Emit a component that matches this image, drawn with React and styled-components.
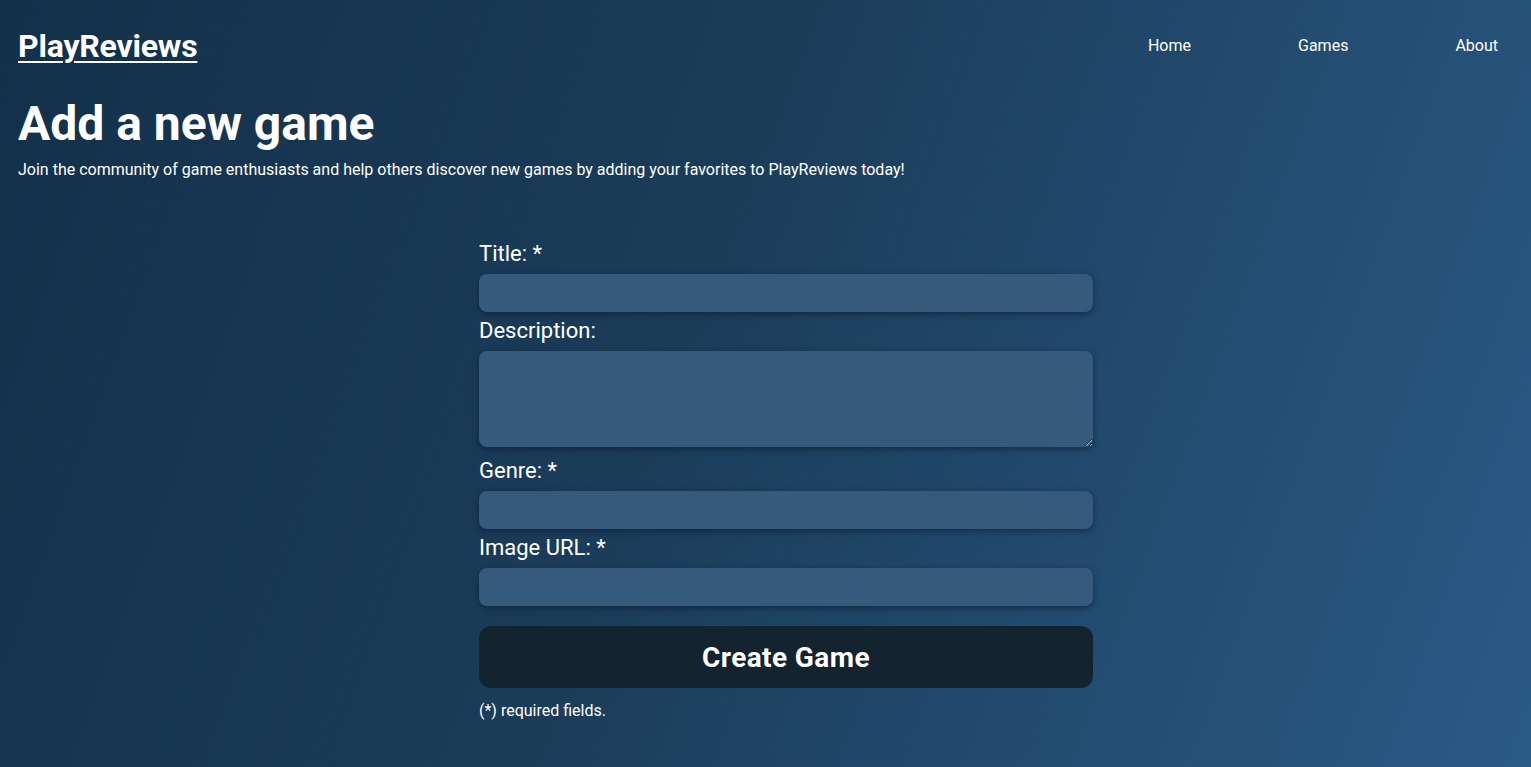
import React from "react";
import styled, { createGlobalStyle } from "styled-components";

const GlobalStyle = createGlobalStyle`
  html, body {
    margin: 0;
    padding: 0;
    min-height: 100%;
  }
  body {
    font-family: Roboto, "Noto Sans", sans-serif;
    color: #ffffff;
    background: #163650;
  }
  * { box-sizing: border-box; }
`;

const Page = styled.div`
  min-height: 767px;
  background: linear-gradient(110deg, #12304a 0%, #1b3d5a 45%, #2a5a86 100%);
  padding: 0 33px 40px 18px;
`;

const Header = styled.header`
  display: flex;
  align-items: center;
  justify-content: space-between;
  height: 91px;
`;

const Logo = styled.a`
  font-size: 32px;
  font-weight: 700;
  color: #ffffff;
  text-decoration: underline;
  text-decoration-thickness: 2px;
  text-underline-offset: 4px;
  letter-spacing: -0.2px;
`;

const Nav = styled.nav`
  display: flex;
  gap: 107px;
`;

const NavLink = styled.a`
  font-size: 16px;
  color: #ffffff;
  text-decoration: none;
`;

const Hero = styled.section`
  display: flex;
  flex-direction: column;
`;

const Title = styled.h1`
  margin: 5px 0 0;
  font-size: 48px;
  font-weight: 700;
  line-height: 56px;
`;

const Subtitle = styled.p`
  margin: 8px 0 0;
  font-size: 16px;
  line-height: 19px;
`;

const FormWrap = styled.div`
  display: flex;
  justify-content: flex-start;
  padding-left: 461px;
  margin-top: 62px;
`;

const Form = styled.form`
  width: 614px;
  display: flex;
  flex-direction: column;
`;

const Label = styled.label`
  display: block;
  font-size: 22px;
  line-height: 26px;
  margin-bottom: 7px;
`;

const fieldStyles = `
  display: block;
  width: 100%;
  border: none;
  border-radius: 8px;
  background: #355a7b;
  color: #ffffff;
  font-family: Roboto, sans-serif;
  font-size: 16px;
  box-shadow: 0 2px 6px rgba(8, 20, 35, 0.55);
  outline: none;
`;

const Input = styled.input`
  ${fieldStyles}
  height: 38px;
  padding: 0 12px;
  margin-bottom: 6px;
`;

const TextArea = styled.textarea`
  ${fieldStyles}
  height: 96px;
  padding: 10px 12px;
  margin-bottom: 11px;
  resize: vertical;
`;

const Button = styled.button`
  margin-top: 14px;
  height: 62px;
  width: 100%;
  border: none;
  border-radius: 12px;
  background: #14242f;
  color: #ffffff;
  font-family: Roboto, sans-serif;
  font-size: 28px;
  font-weight: 700;
  letter-spacing: 0.4px;
  cursor: pointer;
`;

const Note = styled.p`
  margin: 13px 0 0;
  font-size: 16px;
  line-height: 19px;
`;

export default function App() {
  return (
    <>
      <GlobalStyle />
      <Page>
        <Header>
          <Logo href="#">PlayReviews</Logo>
          <Nav>
            <NavLink href="#">Home</NavLink>
            <NavLink href="#">Games</NavLink>
            <NavLink href="#">About</NavLink>
          </Nav>
        </Header>
        <Hero>
          <Title>Add a new game</Title>
          <Subtitle>
            Join the community of game enthusiasts and help others discover new games by adding your favorites to PlayReviews today!
          </Subtitle>
        </Hero>
        <FormWrap>
          <Form onSubmit={(e) => e.preventDefault()}>
            <Label htmlFor="title">Title: *</Label>
            <Input id="title" type="text" />
            <Label htmlFor="description">Description:</Label>
            <TextArea id="description" />
            <Label htmlFor="genre">Genre: *</Label>
            <Input id="genre" type="text" />
            <Label htmlFor="image">Image URL: *</Label>
            <Input id="image" type="text" />
            <Button type="submit">Create Game</Button>
            <Note>(*) required fields.</Note>
          </Form>
        </FormWrap>
      </Page>
    </>
  );
}
